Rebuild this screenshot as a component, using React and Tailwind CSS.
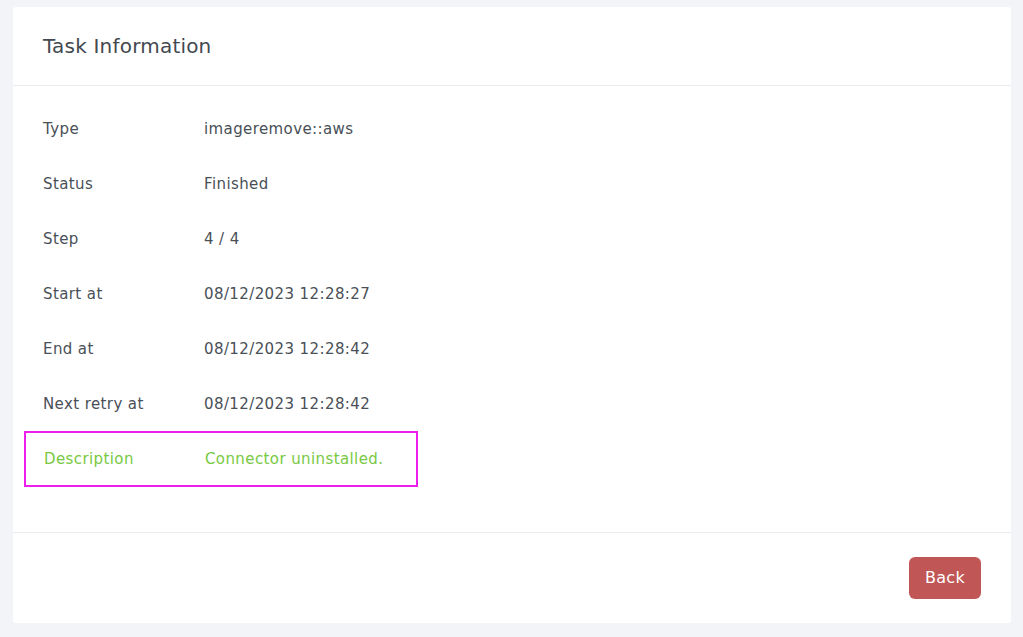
export default function App() {
  const rows = [
    ['Type', 'imageremove::aws'],
    ['Status', 'Finished'],
    ['Step', '4 / 4'],
    ['Start at', '08/12/2023 12:28:27'],
    ['End at', '08/12/2023 12:28:42'],
    ['Next retry at', '08/12/2023 12:28:42'],
  ];

  return (
    <div className="w-full h-screen bg-[#f3f4f7] pt-[7px] pl-[13px] pr-[12px] font-['DejaVu_Sans',sans-serif]">
      <div className="bg-white rounded-[3px] h-[616px] flex flex-col">
        {/* Header */}
        <div className="h-[79px] flex items-center px-[30px] border-b border-[#e9ebef]">
          <h2 className="text-[20px] text-[#43494f] tracking-[0.2px]">Task Information</h2>
        </div>
        {/* Body */}
        <div className="flex-1 pt-[16px] px-[11px]">
          {rows.map(([label, value]) => (
            <div key={label} className="h-[55px] flex items-center px-[19px] text-[15px] tracking-[0.4px] text-[#495057]">
              <span className="w-[161px]">{label}</span>
              <span>{value}</span>
            </div>
          ))}
          <div className="mt-[-1px] h-[56px] w-[394px] flex items-center px-[18px] text-[15px] tracking-[0.4px] text-[#79c943] border-2 border-[#ee1fee]">
            <span className="w-[161px]">Description</span>
            <span>Connector uninstalled.</span>
          </div>
        </div>
        {/* Footer */}
        <div className="h-[91px] border-t border-[#e9ebef] flex items-center justify-end pr-[30px]">
          <button className="h-[42px] w-[72px] rounded-[6px] bg-[#c05656] text-white text-[16px] tracking-[0.3px]">Back</button>
        </div>
      </div>
    </div>
  );
}
